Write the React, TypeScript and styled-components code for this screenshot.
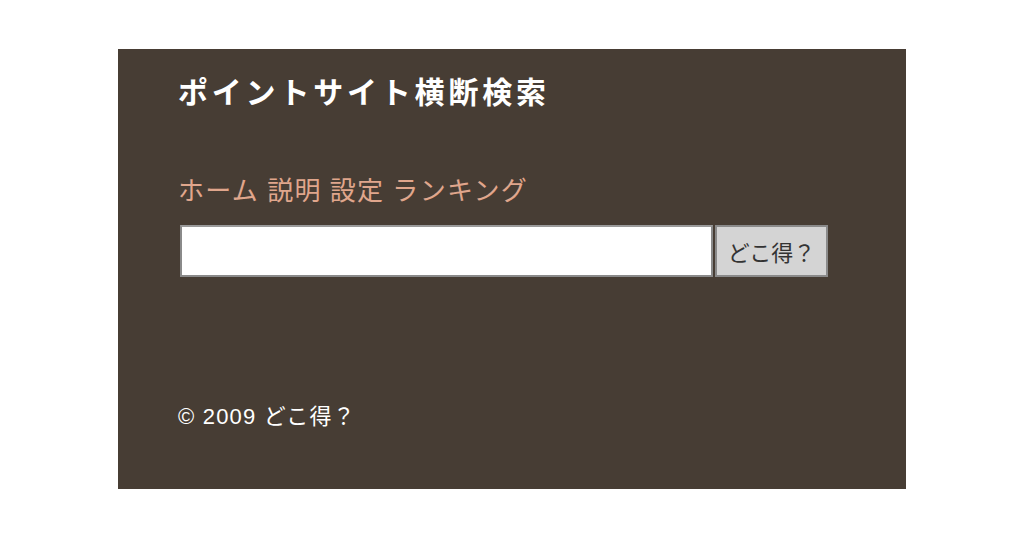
import styled, { createGlobalStyle } from "styled-components";

const GlobalStyle = createGlobalStyle`
  html, body {
    margin: 0;
    padding: 0;
    background: #ffffff;
  }
  body {
    font-family: "Liberation Sans", "Noto Sans CJK JP", sans-serif;
  }
`;

const Page = styled.div`
  display: flex;
  justify-content: center;
  padding-top: 49px;
`;

const Panel = styled.div`
  width: 788px;
  height: 440px;
  box-sizing: border-box;
  background: #473d34;
  padding: 19px 60px 0 60px;
  display: flex;
  flex-direction: column;
`;

const Title = styled.h1`
  margin: 0;
  color: #ffffff;
  font-family: "Noto Sans CJK JP", sans-serif;
  font-size: 30px;
  font-weight: bold;
  line-height: 44px;
  letter-spacing: 3.8px;
`;

const Nav = styled.nav`
  display: flex;
  gap: 8px;
  margin-top: 60px;
`;

const NavLink = styled.a`
  color: #e0a68c;
  font-family: "Noto Sans CJK JP", sans-serif;
  font-size: 26px;
  line-height: 34px;
  letter-spacing: 1.3px;
  text-decoration: none;
  cursor: pointer;
`;

const SearchForm = styled.form`
  display: flex;
  margin: 19px 0 0 2px;
  gap: 2px;
`;

const SearchInput = styled.input`
  width: 533px;
  height: 52px;
  box-sizing: border-box;
  border: 2px solid #8a8a8a;
  border-top-color: #9a9a9a;
  background: #ffffff;
  font-size: 18px;
  padding: 0 6px;
  outline: none;
`;

const SearchButton = styled.button`
  width: 113px;
  height: 52px;
  box-sizing: border-box;
  border: 2px solid #8a8a8a;
  background: #d4d4d4;
  color: #333333;
  font-family: "Noto Sans CJK JP", sans-serif;
  font-size: 22px;
  padding: 0;
  cursor: pointer;
`;

const Footer = styled.footer`
  margin-top: auto;
  margin-bottom: 58px;
  color: #ffffff;
  font-size: 22px;
  line-height: 28px;
  letter-spacing: 1.2px;
`;

export default function App() {
  return (
    <>
      <GlobalStyle />
      <Page>
        <Panel>
          <Title>ポイントサイト横断検索</Title>
          <Nav>
            <NavLink>ホーム</NavLink>
            <NavLink>説明</NavLink>
            <NavLink>設定</NavLink>
            <NavLink>ランキング</NavLink>
          </Nav>
          <SearchForm onSubmit={(e) => e.preventDefault()}>
            <SearchInput type="text" />
            <SearchButton type="submit">どこ得？</SearchButton>
          </SearchForm>
          <Footer>© 2009 どこ得？</Footer>
        </Panel>
      </Page>
    </>
  );
}
